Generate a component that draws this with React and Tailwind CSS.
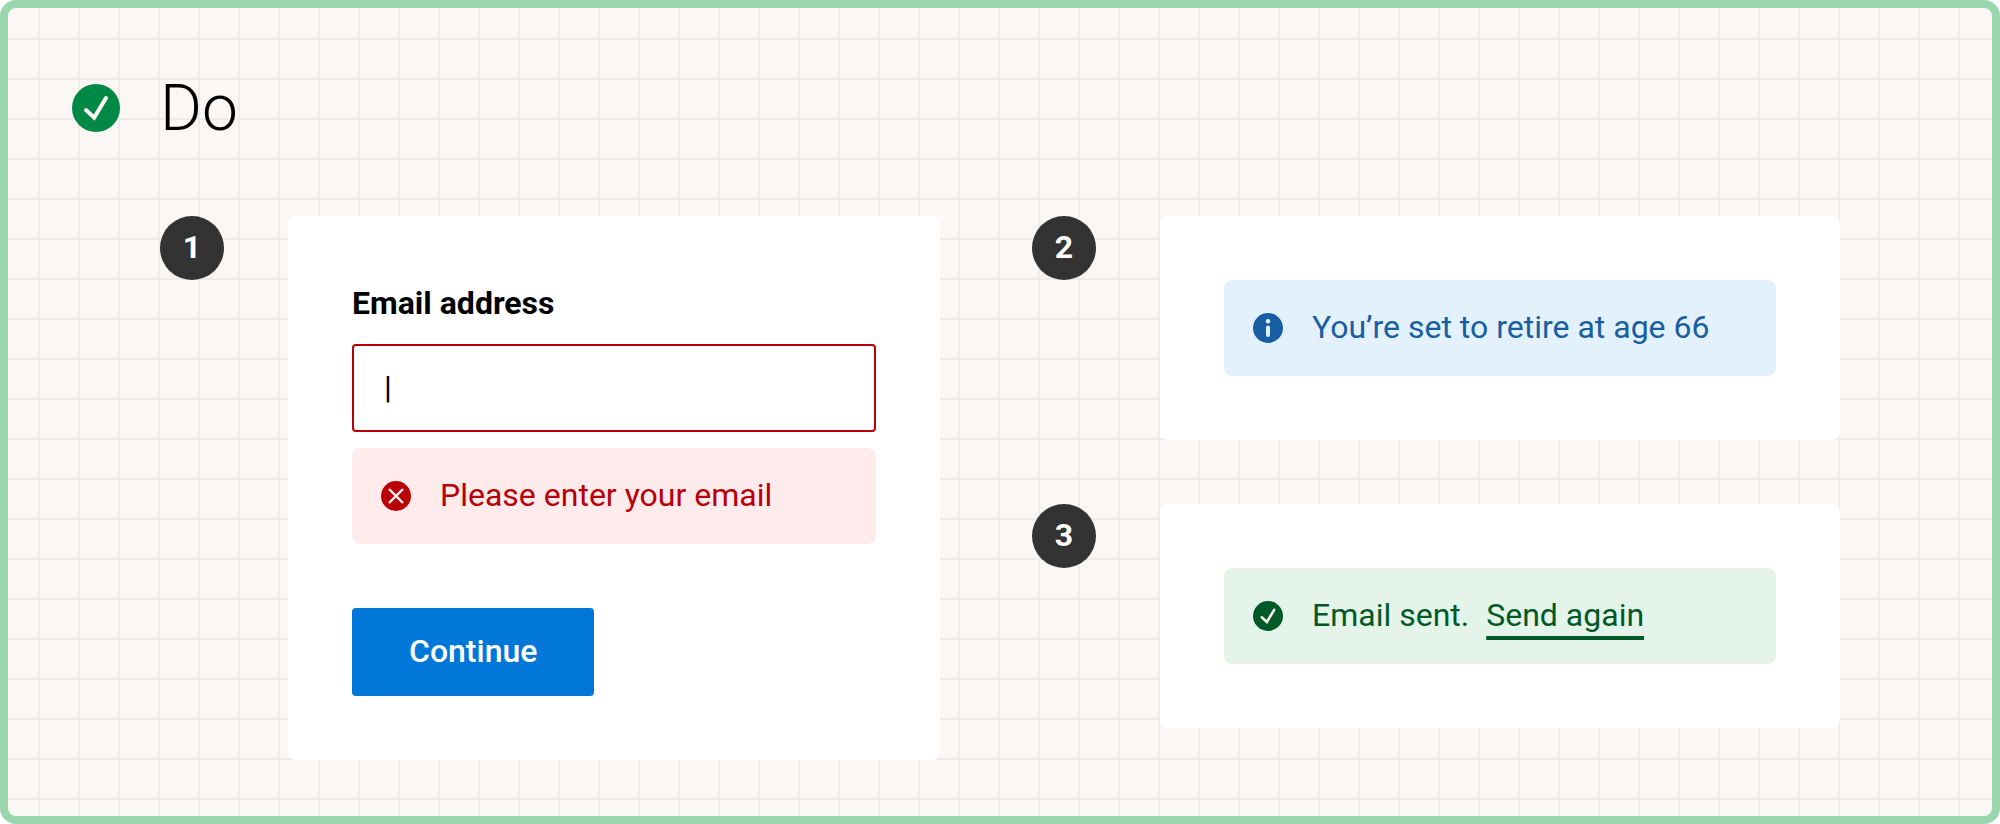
function SuccessIcon({ className }) {
  return (
    <svg viewBox="0 0 48 48" fill="none" aria-hidden="true" className={className}>
      <circle cx="24" cy="24" r="24" fill="currentColor" />
      <path d="M14 26l8.2 7.6L34 14" className="stroke-[#fbf7f4]" strokeWidth="4" strokeLinecap="round" />
    </svg>
  );
}

function ErrorIcon({ className }) {
  return (
    <svg viewBox="0 0 30 30" fill="none" aria-hidden="true" className={className}>
      <circle cx="15" cy="15" r="15" fill="currentColor" />
      <path d="M8.6 8.6l12.8 12.8M21.4 8.6L8.6 21.4" className="stroke-[#ffebec]" strokeWidth="2.3" strokeLinecap="round" />
    </svg>
  );
}

function InfoIcon({ className }) {
  return (
    <svg viewBox="0 0 30 30" fill="none" aria-hidden="true" className={className}>
      <circle cx="15" cy="15" r="15" fill="currentColor" />
      <circle cx="15" cy="8.3" r="2.2" className="fill-[#e3f1fc]" />
      <rect x="13" y="12.4" width="4" height="11.7" rx="2" className="fill-[#e3f1fc]" />
    </svg>
  );
}

function Example({ number, children }) {
  return (
    <li className="flex items-start gap-16">
      <span className="flex size-16 shrink-0 items-center justify-center rounded-full bg-[#333333] pb-0.5 text-[32px] font-bold text-white">
        {number}
      </span>
      <div className="min-w-0 flex-1 rounded-lg bg-white p-16">{children}</div>
    </li>
  );
}

const tones = {
  error: "bg-[#ffebec] text-[#b80006]",
  info: "bg-[#e3f1fc] text-[#175ea2]",
  success: "bg-[#e4f4ea] text-[#005a27]",
};

function Alert({ tone, icon: Icon, id, children }) {
  return (
    <div id={id} role="status" className={`flex min-h-24 items-center gap-7 rounded-lg px-7 ${tones[tone]}`}>
      <span className="flex size-8 shrink-0 items-center justify-center">
        <Icon className="size-[30px]" />
      </span>
      <p className="pb-0.5">{children}</p>
    </div>
  );
}

export default function App() {
  return (
    <main className="min-h-screen rounded-2xl border-8 border-[#99d6ad] bg-[#fbf7f4] bg-[linear-gradient(to_top,#efebe8_2px,transparent_2px),linear-gradient(to_left,#efebe8_2px,transparent_2px)] bg-[size:40px_40px] bg-[position:-8px_-8px] pt-[67px] pb-14 font-['Roboto',sans-serif] text-[32px] leading-10 text-black">
      <header className="flex items-center gap-10 pl-16">
        <SuccessIcon className="size-12 text-[#008845]" />
        <h1 className="pt-0.5 text-[64px] leading-16 font-light">Do</h1>
      </header>

      <div className="mt-[75px] grid grid-cols-[780fr_808fr] items-start gap-[92px] px-[152px]">
        <ol>
          <Example number={1}>
            <form onSubmit={(event) => event.preventDefault()}>
              <label htmlFor="email" className="block pb-0.5 leading-[46px] font-bold">
                Email address
              </label>
              <input
                id="email"
                type="text"
                defaultValue="|"
                aria-invalid="true"
                aria-describedby="email-error"
                className="mt-4 mb-4 block h-[88px] w-full rounded-sm border-2 border-[#b80006] bg-white px-[30px] pb-0.5 outline-none"
              />
              <Alert tone="error" icon={ErrorIcon} id="email-error">
                Please enter your email
              </Alert>
              <button type="submit" className="mt-16 block h-[88px] rounded-sm bg-[#0077d9] px-[57px] pb-0.5 font-medium text-white">
                Continue
              </button>
            </form>
          </Example>
        </ol>

        <ol start={2} className="grid gap-16">
          <Example number={2}>
            <Alert tone="info" icon={InfoIcon}>
              You’re set to retire at age 66
            </Alert>
          </Example>
          <Example number={3}>
            <Alert tone="success" icon={SuccessIcon}>
              Email sent.
              <a
                href="#send-again"
                className="ml-[17px] underline decoration-4 underline-offset-[10px] [text-decoration-skip-ink:none]"
              >
                Send again
              </a>
            </Alert>
          </Example>
        </ol>
      </div>
    </main>
  );
}
